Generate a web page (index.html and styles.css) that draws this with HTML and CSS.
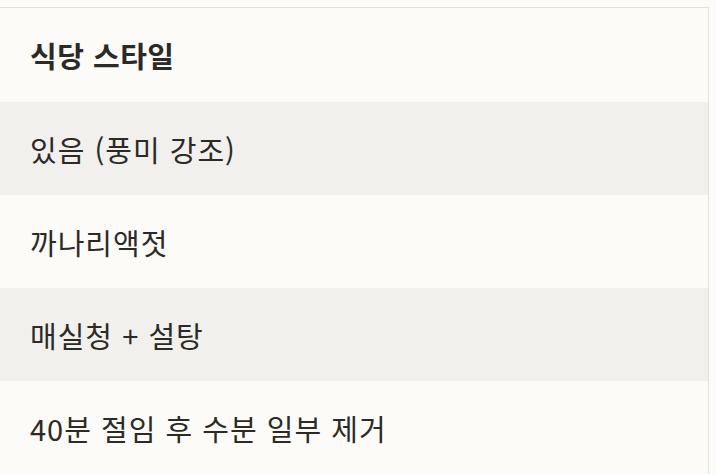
FILE: index.html
```html
<!DOCTYPE html>
<html lang="ko">
<head>
<meta charset="utf-8">
<link rel="stylesheet" href="styles.css">
</head>
<body>
<div class="table">
  <div class="row head">식당 스타일</div>
  <div class="row alt">있음 (풍미 강조)</div>
  <div class="row">까나리액젓</div>
  <div class="row alt">매실청 + 설탕</div>
  <div class="row">40분 절임 후 수분 일부 제거</div>
</div>
</body>
</html>
```
FILE: styles.css
```css
html, body {
  margin: 0;
  padding: 0;
  background: #fcfbf8;
}
body {
  font-family: "Noto Sans CJK KR", "Noto Sans", sans-serif;
  color: #2b2a26;
  padding-top: 7px;
}
.table {
  width: 708px;
  border-top: 1px solid #e4e2de;
  border-right: 1px solid #e4e2de;
}
.row {
  height: 93px;
  display: flex;
  align-items: center;
  padding-left: 30px;
  font-size: 29px;
  letter-spacing: 1px;
  background: #fcfbf8;
}
.row.head {
  height: 94px;
  font-weight: 700;
  letter-spacing: 0.5px;
}
.row.alt {
  background: #f1f0ed;
}
```
